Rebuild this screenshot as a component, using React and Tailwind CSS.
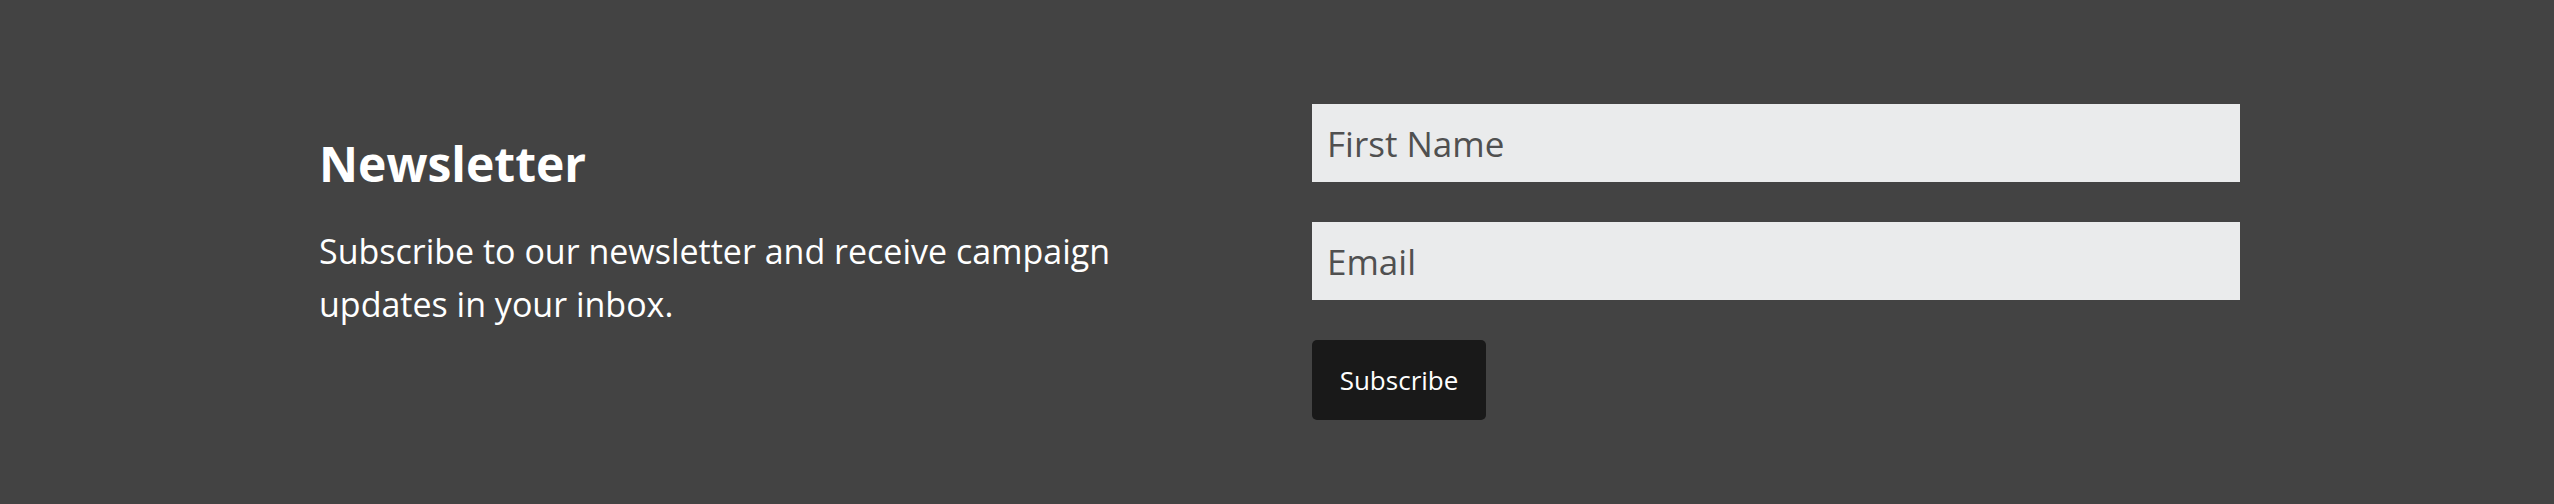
import React from "react";

const Newsletter = () => {
  return (
    <div className="w-full h-[504px] bg-[#434343] font-['Open_Sans','Liberation_Sans',sans-serif]">
      <div className="flex pl-[319px] pt-[104px]">
        <div className="w-[993px] pt-[31px]">
          <h2 className="text-[48px] leading-[58px] font-bold text-white">
            Newsletter
          </h2>
          <p className="mt-[32px] w-[860px] text-[34px] leading-[53px] text-white">
            Subscribe to our newsletter and receive campaign updates in your
            inbox.
          </p>
        </div>

        <form className="flex flex-col w-[928px]" onSubmit={(e) => e.preventDefault()}>
          <input
            type="text"
            placeholder="First Name"
            className="h-[78px] w-full bg-[#eaebec] px-[15px] text-[35px] text-[#333] placeholder:text-[#505050] outline-none"
          />
          <input
            type="email"
            placeholder="Email"
            className="mt-[40px] h-[78px] w-full bg-[#eaebec] px-[15px] text-[35px] text-[#333] placeholder:text-[#505050] outline-none"
          />
          <button
            type="submit"
            className="mt-[40px] h-[80px] w-[174px] rounded-[5px] bg-[#191919] text-[26px] font-medium text-white"
          >
            Subscribe
          </button>
        </form>
      </div>
    </div>
  );
};

export default function App() {
  return <Newsletter />;
}
